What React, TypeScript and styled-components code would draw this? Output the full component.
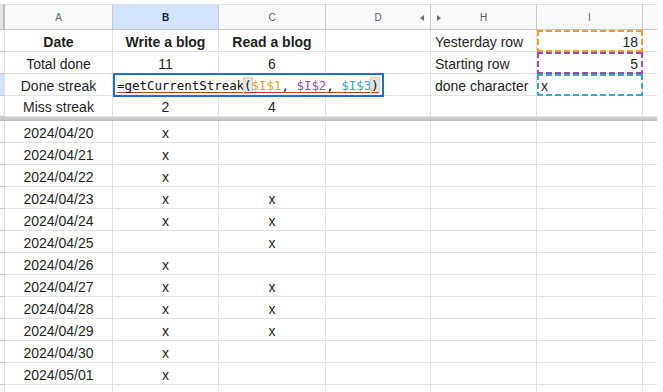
import styled, { createGlobalStyle, css } from 'styled-components';

const GlobalStyle = createGlobalStyle`
  html, body {
    margin: 0;
    padding: 0;
    background: #fff;
  }
  body {
    font-family: 'Liberation Sans', Arial, sans-serif;
    overflow: hidden;
  }
`;

const COLS = '5px 108px 106px 107px 105px 106px 106px 14px';
const LINE = '#e2e2e2';

type Align = 'left' | 'center' | 'right';

const Sheet = styled.div`
  width: 657px;
  height: 392px;
  padding-top: 4px;
  box-sizing: border-box;
  overflow: hidden;
  color: #1f1f1f;
`;

const Row = styled.div<{ $height: number }>`
  display: grid;
  grid-template-columns: ${COLS};
  height: ${(p) => p.$height}px;
`;

const Gutter = styled.div<{ $selected?: boolean; $head?: boolean }>`
  box-sizing: border-box;
  background: ${(p) => (p.$selected ? '#d3e3fd' : '#f8f9fa')};
  border-right: 1px solid #dadce0;
  border-bottom: 1px solid #c4c7c5;
  ${(p) =>
    p.$head &&
    css`
      background: #e3e3e3;
      border-right: 2px solid #bdbdbd;
      border-top: 1px solid #e0e0e0;
    `}
`;

const ColHead = styled.div<{ $selected?: boolean; $last?: boolean }>`
  position: relative;
  box-sizing: border-box;
  display: flex;
  align-items: center;
  justify-content: center;
  padding-top: 1px;
  font-size: 10px;
  color: ${(p) => (p.$selected ? '#0b1f44' : '#5f6368')};
  font-weight: ${(p) => (p.$selected ? 700 : 400)};
  background: ${(p) => (p.$selected ? '#d3e3fd' : '#f8f9fa')};
  border-top: 1px solid #e0e0e0;
  border-right: ${(p) => (p.$last ? 'none' : '1px solid #c9c9c9')};
  border-bottom: 1px solid #c4c7c5;
`;

const Arrow = styled.span<{ $dir: 'left' | 'right' }>`
  position: absolute;
  top: 10px;
  width: 0;
  height: 0;
  border-top: 3px solid transparent;
  border-bottom: 3px solid transparent;
  ${(p) =>
    p.$dir === 'left'
      ? css`
          right: 6px;
          border-right: 4px solid #6f6f6f;
        `
      : css`
          left: 6px;
          border-left: 4px solid #6f6f6f;
        `}
`;

const Cell = styled.div<{ $align?: Align; $bold?: boolean; $noRight?: boolean }>`
  position: relative;
  box-sizing: border-box;
  display: flex;
  align-items: flex-end;
  justify-content: ${(p) =>
    p.$align === 'left' ? 'flex-start' : p.$align === 'right' ? 'flex-end' : 'center'};
  padding: 0 4px;
  font-size: 14px;
  line-height: 17px;
  font-weight: ${(p) => (p.$bold ? 700 : 400)};
  white-space: nowrap;
  border-right: ${(p) => (p.$noRight ? 'none' : `1px solid ${LINE}`)};
  border-bottom: 1px solid ${LINE};
`;

const dashes = (c: string) => css`
  background:
    repeating-linear-gradient(90deg, ${c} 0 6px, transparent 6px 9px) top left / 100% 2px no-repeat,
    repeating-linear-gradient(90deg, ${c} 0 6px, transparent 6px 9px) bottom left / 100% 2px no-repeat,
    repeating-linear-gradient(180deg, ${c} 0 6px, transparent 6px 9px) top left / 2px 100% no-repeat,
    repeating-linear-gradient(180deg, ${c} 0 6px, transparent 6px 9px) top right / 2px 100% no-repeat;
`;

const RefCell = styled(Cell)<{ $dash: string }>`
  &::after {
    content: '';
    position: absolute;
    top: 0;
    left: 0;
    right: -1px;
    bottom: -1px;
    ${(p) => dashes(p.$dash)}
    pointer-events: none;
  }
`;

const Editor = styled.div`
  position: absolute;
  left: 0;
  top: -1px;
  width: 271px;
  height: 24px;
  box-sizing: border-box;
  z-index: 2;
  display: flex;
  align-items: center;
  padding-left: 2px;
  background: #fff;
  border: 2px solid #1a6ee0;
  font-family: 'DejaVu Sans Mono', 'Liberation Mono', monospace;
  font-size: 12.5px;
  letter-spacing: -0.05px;
  color: #111;
`;

const Formula = styled.span`
  text-decoration: underline;
  text-decoration-color: #c43a2c;
  text-decoration-skip-ink: none;
  text-underline-offset: 2px;
`;

const Ref = styled.span<{ $color: string }>`
  color: ${(p) => p.$color};
`;

const Paren = styled.span`
  background: #e6e6e6;
  box-shadow: 0 0 0 1px #d6d6d6;
`;

const FreezeBar = styled.div`
  height: 4px;
  background: linear-gradient(#d4d4d4, #bfbfbf);
`;

const ORANGE = '#f29d2e';
const PURPLE = '#9a4dab';
const TEAL = '#33a9cf';

type Frozen = {
  a: string;
  b?: string;
  c?: string;
  h?: string;
  i?: string;
  iAlign?: Align;
  bold?: boolean;
  dash?: string;
  formula?: boolean;
  height: number;
};

const frozen: Frozen[] = [
  { a: 'Date', b: 'Write a blog', c: 'Read a blog', h: 'Yesterday row', i: '18', bold: true, dash: ORANGE, height: 22 },
  { a: 'Total done', b: '11', c: '6', h: 'Starting row', i: '5', dash: PURPLE, height: 22 },
  { a: 'Done streak', formula: true, h: 'done character', i: 'x', iAlign: 'left', dash: TEAL, height: 22 },
  { a: 'Miss streak', b: '2', c: '4', height: 21 },
];

const days: [string, string, string][] = [
  ['2024/04/20', 'x', ''],
  ['2024/04/21', 'x', ''],
  ['2024/04/22', 'x', ''],
  ['2024/04/23', 'x', 'x'],
  ['2024/04/24', 'x', 'x'],
  ['2024/04/25', '', 'x'],
  ['2024/04/26', 'x', ''],
  ['2024/04/27', 'x', 'x'],
  ['2024/04/28', 'x', 'x'],
  ['2024/04/29', 'x', 'x'],
  ['2024/04/30', 'x', ''],
  ['2024/05/01', 'x', ''],
  ['', '', ''],
];

function FormulaEditor() {
  return (
    <Editor>
      <Formula>
        =getCurrentStreak<Paren>(</Paren>
        <Ref $color={ORANGE}>$I$1</Ref>, <Ref $color={PURPLE}>$I$2</Ref>,{' '}
        <Ref $color={TEAL}>$I$3</Ref>
        <Paren>)</Paren>
      </Formula>
    </Editor>
  );
}

export default function App() {
  return (
    <>
      <GlobalStyle />
      <Sheet>
        <Row $height={26}>
          <Gutter $head />
          <ColHead>A</ColHead>
          <ColHead $selected>B</ColHead>
          <ColHead>C</ColHead>
          <ColHead>
            D
            <Arrow $dir="left" />
          </ColHead>
          <ColHead>
            <Arrow $dir="right" />H
          </ColHead>
          <ColHead>I</ColHead>
          <ColHead $last />
        </Row>

        {frozen.map((r) => (
          <Row key={r.a} $height={r.height}>
            <Gutter $selected={r.formula} />
            <Cell $bold={r.bold}>{r.a}</Cell>
            <Cell $bold={r.bold}>{r.formula ? <FormulaEditor /> : r.b}</Cell>
            <Cell $bold={r.bold}>{r.c}</Cell>
            <Cell />
            <Cell $align="left">{r.h}</Cell>
            {r.dash ? (
              <RefCell $dash={r.dash} $align={r.iAlign ?? 'right'}>
                {r.i}
              </RefCell>
            ) : (
              <Cell />
            )}
            <Cell $noRight />
          </Row>
        ))}

        <FreezeBar />

        {days.map(([d, w, rd], idx) => (
          <Row key={idx} $height={22}>
            <Gutter />
            <Cell>{d}</Cell>
            <Cell>{w}</Cell>
            <Cell>{rd}</Cell>
            <Cell />
            <Cell />
            <Cell />
            <Cell $noRight />
          </Row>
        ))}
      </Sheet>
    </>
  );
}
